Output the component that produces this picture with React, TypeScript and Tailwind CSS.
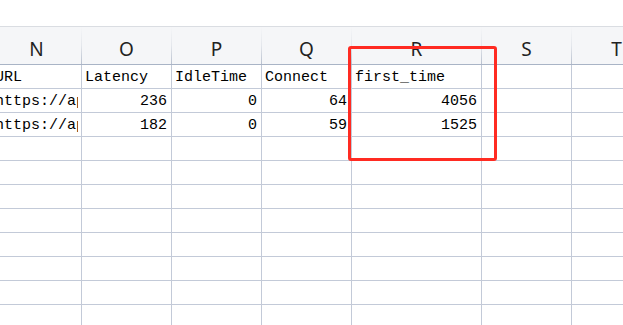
const columns = [
  { key: "N", width: "w-[90px]" },
  { key: "O", width: "w-[90px]" },
  { key: "P", width: "w-[90px]" },
  { key: "Q", width: "w-[90px]" },
  { key: "R", width: "w-[130px]" },
  { key: "S", width: "w-[90px]" },
  { key: "T", width: "w-[90px]" },
];

type Cell = { text: string; align?: "left" | "right" };

const rows: Cell[][] = [
  [
    { text: "URL" },
    { text: "Latency" },
    { text: "IdleTime" },
    { text: "Connect" },
    { text: "first_time" },
    { text: "" },
    { text: "" },
  ],
  [
    { text: "https://ap" },
    { text: "236", align: "right" },
    { text: "0", align: "right" },
    { text: "64", align: "right" },
    { text: "4056", align: "right" },
    { text: "" },
    { text: "" },
  ],
  [
    { text: "https://ap" },
    { text: "182", align: "right" },
    { text: "0", align: "right" },
    { text: "59", align: "right" },
    { text: "1525", align: "right" },
    { text: "" },
    { text: "" },
  ],
];

const emptyRows = 8;

function HeaderCell({ label, width }: { label: string; width: string }) {
  return (
    <div className={`${width} shrink-0 flex h-full`}>
      <div className="flex-1 flex items-end justify-center pb-[4px] text-[19px] leading-none text-[#222] font-['Noto_Sans',sans-serif]">
        <span className="pb-[1px]">{label}</span>
      </div>
      <div className="w-px self-stretch bg-gradient-to-b from-transparent via-[#e4e7ec] to-[#b9c1cf]" />
    </div>
  );
}

function GridCell({ cell, width }: { cell: Cell; width: string }) {
  return (
    <div
      className={`${width} shrink-0 h-full border-r border-[#c3cad8] overflow-hidden whitespace-nowrap flex items-end pb-[2px] px-[3px] ${
        cell.align === "right" ? "justify-end pr-[4px]" : "justify-start"
      }`}
    >
      <span className="min-w-0 overflow-hidden text-[15px] leading-[16px] text-black font-['Liberation_Mono',monospace]">
        {cell.text}
      </span>
    </div>
  );
}

export default function App() {
  return (
    <div className="relative w-[623px] h-[325px] overflow-hidden bg-white">
      <div className="h-[26px]" />

      {/* column letters */}
      <div className="flex h-[39px] ml-[-8px] bg-[#f5f6f8] border-t border-[#dadde2] border-b border-b-[#a9b4c6]">
        {columns.map((c) => (
          <HeaderCell key={c.key} label={c.key} width={c.width} />
        ))}
      </div>

      {/* sheet body */}
      <div className="flex flex-col ml-[-8px]">
        {rows.map((row, i) => (
          <div key={i} className="flex h-[24px] border-b border-[#c3cad8]">
            {row.map((cell, j) => (
              <GridCell key={j} cell={cell} width={columns[j].width} />
            ))}
          </div>
        ))}
        {Array.from({ length: emptyRows }).map((_, i) => (
          <div key={`e${i}`} className="flex h-[24px] border-b border-[#c3cad8]">
            {columns.map((c) => (
              <GridCell key={c.key} cell={{ text: "" }} width={c.width} />
            ))}
          </div>
        ))}
      </div>

      {/* highlight box drawn over the first_time column */}
      <div className="absolute left-[348px] top-[46px] w-[149px] h-[115px] border-[3px] border-[#ff2b22] rounded-[3px]" />
    </div>
  );
}
